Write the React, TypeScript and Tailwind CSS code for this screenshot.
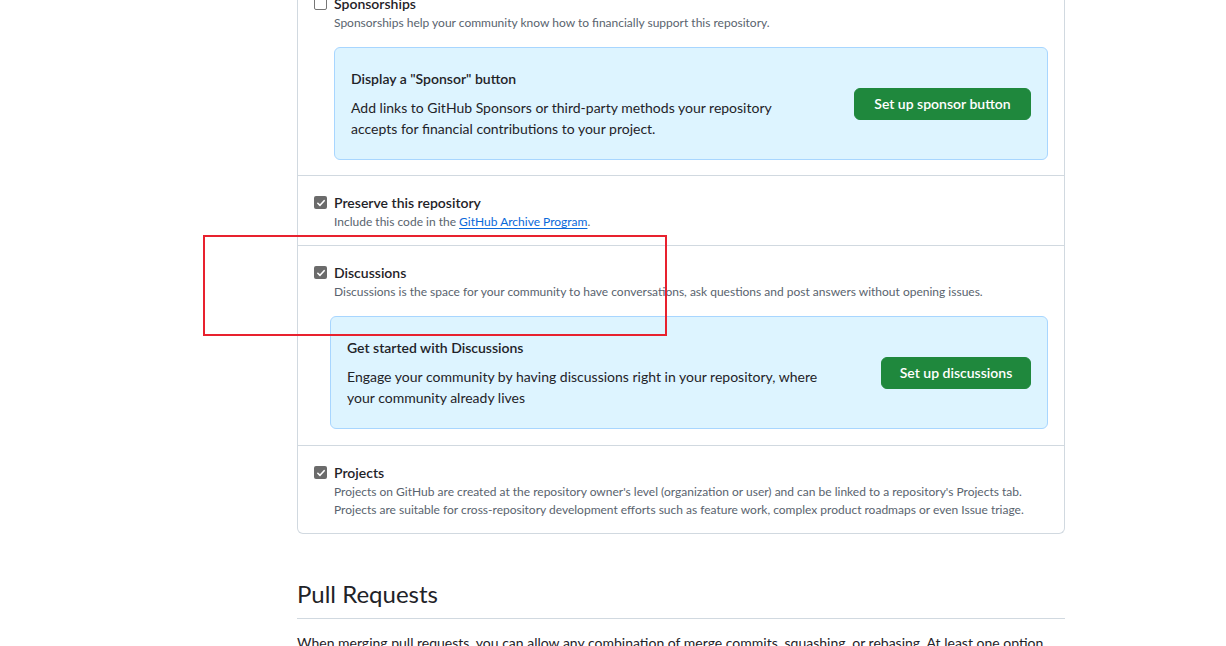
import React from 'react'

const font = { fontFamily: '"Segoe UI", Lato, "Liberation Sans", sans-serif' }

function Check({ checked }: { checked: boolean }) {
  if (!checked) {
    return <span className="mt-[4px] block h-[13px] w-[13px] shrink-0 rounded-[2px] border border-[#767676] bg-white" />
  }
  return (
    <span className="mt-[4px] flex h-[13px] w-[13px] shrink-0 items-center justify-center rounded-[2px] bg-[#6b6b6b]">
      <svg viewBox="0 0 12 12" className="h-[10px] w-[10px]" fill="none">
        <path d="M2.2 6.3 4.8 8.8 9.8 3.2" stroke="white" strokeWidth="1.9" strokeLinecap="round" strokeLinejoin="round" />
      </svg>
    </span>
  )
}

type CalloutProps = { title: string; body: string; action: string; textClass: string; buttonClass: string }

function Callout({ title, body, action, textClass, buttonClass }: CalloutProps) {
  return (
    <div className="mt-[15px] flex items-center rounded-md border border-[#a8d6ff] bg-[#ddf4ff] px-4 py-5">
      <div className={textClass}>
        <h3 className="text-sm font-semibold leading-[21px] text-[#1f2328]">{title}</h3>
        <p className="mt-2 text-sm leading-[21px] text-[#1f2328]">{body}</p>
      </div>
      <button className={`ml-auto h-8 rounded-md border border-[#1f883d] bg-[#1f883d] text-sm font-semibold text-white ${buttonClass}`}>
        {action}
      </button>
    </div>
  )
}

type RowProps = {
  checked: boolean
  label: string
  children: React.ReactNode
  extra?: React.ReactNode
  className: string
}

function Row({ checked, label, children, extra, className }: RowProps) {
  return (
    <div className={`px-4 pt-4 ${className}`}>
      <div className="flex gap-[7px]">
        <Check checked={checked} />
        <div>
          <div className="text-sm font-semibold leading-[21px] text-[#1f2328]">{label}</div>
          <p className="text-xs leading-[18px] text-[#59636e]">{children}</p>
        </div>
      </div>
      {extra}
    </div>
  )
}

export default function App() {
  return (
    <div className="relative h-[646px] overflow-hidden bg-white" style={font}>
      <div className="flex">
        <div className="w-[297px] shrink-0" />
        <main className="w-[768px] shrink-0">
          <div className="-mt-[23px] rounded-b-md border border-t-0 border-[#d1d9e0]">
            <Row
              checked={false}
              label="Sponsorships"
              className="border-b border-[#d1d9e0] pb-[15px]"
              extra={
                <div className="pl-5">
                  <Callout
                    title={'Display a "Sponsor" button'}
                    body="Add links to GitHub Sponsors or third-party methods your repository accepts for financial contributions to your project."
                    action="Set up sponsor button"
                    textClass="w-[468px]"
                    buttonClass="w-[177px]"
                  />
                </div>
              }
            >
              Sponsorships help your community know how to financially support this repository.
            </Row>
            <Row checked label="Preserve this repository" className="border-b border-[#d1d9e0] pb-[14px]">
              Include this code in the{' '}
              <a className="text-[#0969da] underline underline-offset-2" href="#">
                GitHub Archive Program
              </a>
              .
            </Row>
            <Row
              checked
              label="Discussions"
              className="border-b border-[#d1d9e0] pb-4"
              extra={
                <div className="pl-4">
                  <Callout
                    title="Get started with Discussions"
                    body="Engage your community by having discussions right in your repository, where your community already lives"
                    action="Set up discussions"
                    textClass="w-[496px]"
                    buttonClass="w-[150px]"
                  />
                </div>
              }
            >
              Discussions is the space for your community to have conversations, ask questions and post answers without opening issues.
            </Row>
            <Row checked label="Projects" className="pb-[14px]">
              Projects on GitHub are created at the repository owner's level (organization or user) and can be linked to a repository's Projects tab.
              Projects are suitable for cross-repository development efforts such as feature work, complex product roadmaps or even Issue triage.
            </Row>
          </div>

          <div className="mt-[42px] border-b border-[#d1d9e0] pb-[6px]">
            <h2 className="text-2xl font-normal leading-[36px] text-[#1f2328]">Pull Requests</h2>
          </div>
          <p className="mt-[13px] text-sm leading-[21px] text-[#1f2328]">
            When merging pull requests, you can allow any combination of merge commits, squashing, or rebasing. At least one option must be
            enabled. If you have linked issues, merging may close them.
          </p>
        </main>
      </div>

      {/* annotation box */}
      <div className="pointer-events-none absolute left-[203px] top-[235px] h-[101px] w-[464px] border-2 border-[#e8212e]" />
    </div>
  )
}
